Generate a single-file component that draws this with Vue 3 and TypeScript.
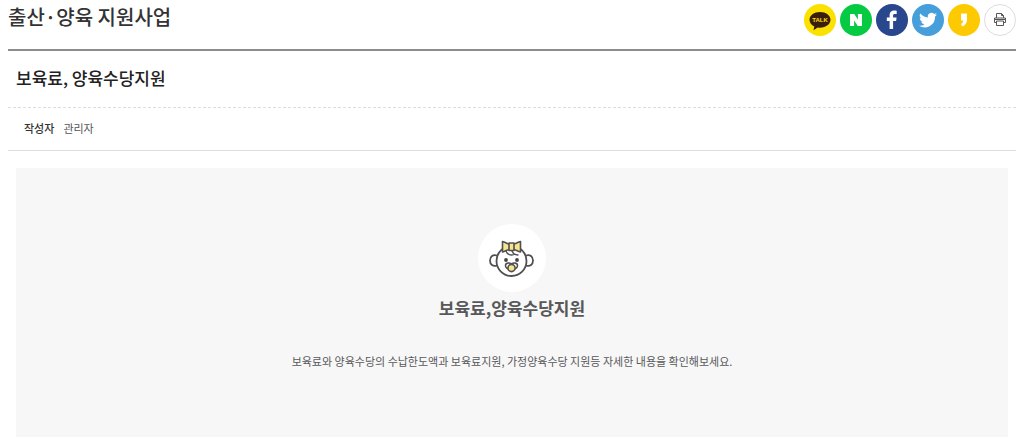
<script setup lang="ts">
interface Article {
  title: string
  author: string
  heading: string
  description: string
}

const article: Article = {
  title: '보육료, 양육수당지원',
  author: '관리자',
  heading: '보육료,양육수당지원',
  description: '보육료와 양육수당의 수납한도액과 보육료지원, 가정양육수당 지원등 자세한 내용을 확인해보세요.',
}

function printPage(): void {
  window.print()
}
</script>

<template>
  <main class="page">
    <header class="page-header">
      <h1>출산·양육 지원사업</h1>
      <nav class="share" aria-label="공유">
        <a class="share-item kakao" href="#" aria-label="카카오톡">
          <svg viewBox="0 0 32 32">
            <path d="M16 8c-6 0-10.500 3.400-10.500 7.800 0 2.900 1.900 5.300 4.800 6.700l-.8 3.700 4.200-2.700c.8.100 1.500.2 2.300.2 6 0 10.500-3.500 10.500-7.900S22 8 16 8z" fill="#3b1d10" />
            <text x="16" y="18" text-anchor="middle" class="talk">TALK</text>
          </svg>
        </a>
        <a class="share-item naver" href="#" aria-label="네이버">
          <svg viewBox="0 0 32 32"><path d="M10 10h4.300l3.600 5.500V10H22v12h-4.200l-3.700-5.500V22H10z" fill="#fff" /></svg>
        </a>
        <a class="share-item facebook" href="#" aria-label="페이스북">
          <svg viewBox="0 0 32 32"><path d="M13.600 25v-8h-2.800v-3.400h2.800v-2.500c0-3 1.800-4.500 4.500-4.500 1.300 0 2.300.1 2.600.2v3.100h-1.800c-1.500 0-1.800.7-1.800 1.700v2h3.500l-.5 3.400h-3v8z" fill="#fff" /></svg>
        </a>
        <a class="share-item twitter" href="#" aria-label="트위터">
          <svg viewBox="0 0 32 32"><path d="M25 10.500a7 7 0 0 1-2.100.6 3.700 3.700 0 0 0 1.600-2 7 7 0 0 1-2.300.9 3.700 3.700 0 0 0-6.300 3.400A10.500 10.500 0 0 1 8.300 9.500a3.700 3.700 0 0 0 1.100 4.900 4 4 0 0 1-1.600-.5c0 1.900 1.200 3.300 2.900 3.700a4 4 0 0 1-1.600.1 3.700 3.700 0 0 0 3.400 2.500A7.500 7.500 0 0 1 7 21.700a10.500 10.500 0 0 0 16.100-9.300 7 7 0 0 0 1.900-1.900z" fill="#fff" /></svg>
        </a>
        <a class="share-item story" href="#" aria-label="카카오스토리">
          <svg viewBox="0 0 32 32"><path d="M13 9.500h6v5.700c0 3.600-1.500 6-4.300 7.300l-1.900-2.200c1.400-.9 2.300-2 2.400-3.800H13z" fill="#fff" /></svg>
        </a>
        <button class="share-item print" type="button" aria-label="인쇄" @click="printPage">
          <svg viewBox="0 0 32 32" fill="none" stroke="#555" stroke-width="1">
            <path d="M12.500 14v-4.500h5l2 2V14M17.500 9.500v2h2M12.500 18.500h-2V14h11v4.500h-2M12.500 17h7v4.500h-7zM10.500 15.500h11" />
          </svg>
        </button>
      </nav>
    </header>

    <article>
      <h2 class="article-title">{{ article.title }}</h2>
      <dl class="meta">
        <dt>작성자</dt>
        <dd>{{ article.author }}</dd>
      </dl>
      <section class="panel">
        <div class="badge">
          <svg viewBox="0 0 68 68" aria-hidden="true" fill="none" stroke="#505054" stroke-width="1.8" stroke-linejoin="round" stroke-linecap="round">
            <path d="M19 31.500c-4-1.500-7 1-7 5s3 6.500 7 5M48 31.500c4-1.500 7 1 7 5s-3 6.500-7 5" />
            <circle cx="33.500" cy="37" r="15" fill="#fff" />
            <path d="M28 27c1 3 4 5 8 3.500M34 27c1 2.500 3.500 4 6 4" stroke-width="1.300" />
            <path d="M31 20c-2-.5-4-2-6.500-2.500v10.500c2.500-.5 4.500-2 6.500-2.500M36 20c2-.5 4-2 6.500-2.500v10.500c-2.500-.5-4.500-2-6.500-2.500" fill="#f6e58a" stroke-width="1.600" />
            <path d="M31 19h5v7.500h-5z" fill="#f6e58a" stroke-width="1.600" />
            <circle cx="28" cy="36" r="1.900" fill="#444448" stroke="none" />
            <circle cx="39" cy="36" r="1.900" fill="#444448" stroke="none" />
            <path d="M33.500 40c-2-1.500-6-1.300-6 1.500 0 2.200 2 3.500 4 3.500h4c2 0 4-1.300 4-3.500 0-2.800-4-3-6-1.500z" fill="#fff" stroke-width="1.600" />
            <circle cx="33.500" cy="44" r="3.600" fill="#f6e58a" stroke-width="1.600" />
          </svg>
        </div>
        <h3>{{ article.heading }}</h3>
        <p>{{ article.description }}</p>
      </section>
    </article>
  </main>
</template>

<style>
body {
  margin: 0;
  background: #fff;
}
</style>

<style scoped>
.page {
  padding: 0 8px;
  font-family: "Noto Sans CJK KR", "Noto Sans", sans-serif;
  color: #333;
}

.page-header {
  display: flex;
  justify-content: space-between;
  align-items: flex-start;
  padding: 3px 0 13px;
  border-bottom: 2px solid #8c8c8c;
}

h1,
h2,
h3,
p,
dl,
dd {
  margin: 0;
}

h1 {
  font-size: 20px;
  line-height: 28px;
  font-weight: 500;
}

.share {
  display: flex;
  gap: 4px;
  padding-top: 1px;
}

.share-item {
  box-sizing: border-box;
  width: 32px;
  height: 32px;
  border-radius: 50%;
  overflow: hidden;
}

.share-item svg {
  display: block;
  width: 32px;
  height: 32px;
}

.kakao { background: #fae100; }
.naver { background: #06cb42; }
.facebook { background: #29478d; }
.twitter { background: #469fdb; }
.story { background: #fdc900; }

.print {
  display: flex;
  align-items: center;
  justify-content: center;
  padding: 0;
  border: 1px solid #ddd;
  background: #fff;
}

.print svg {
  flex: none;
}

.talk {
  font: 700 6px "Liberation Sans", sans-serif;
  fill: #fae100;
}

.article-title {
  padding: 13px 8px 15px;
  font-size: 17px;
  line-height: 28px;
  font-weight: 500;
  color: #222;
  border-bottom: 1px dashed #ddd;
}

.meta {
  display: flex;
  gap: 9px;
  padding: 10px 16px 12px;
  font-size: 11px;
  line-height: 20px;
  border-bottom: 1px solid #ddd;
}

.meta dt {
  font-weight: 500;
}

.meta dd {
  color: #555;
}

.panel {
  display: flex;
  flex-direction: column;
  align-items: center;
  margin: 17px 8px 7px;
  padding: 56px 16px 66px;
  background: #f7f7f7;
  text-align: center;
}

.badge {
  width: 68px;
  height: 68px;
  border-radius: 50%;
  background: #fff;
}

.badge svg {
  display: block;
}

h3 {
  margin-top: 2px;
  font-size: 17px;
  line-height: 28px;
  font-weight: 700;
  color: #58585a;
}

.panel p {
  margin-top: 29px;
  font-size: 11px;
  line-height: 20px;
  color: #58585a;
}
</style>
